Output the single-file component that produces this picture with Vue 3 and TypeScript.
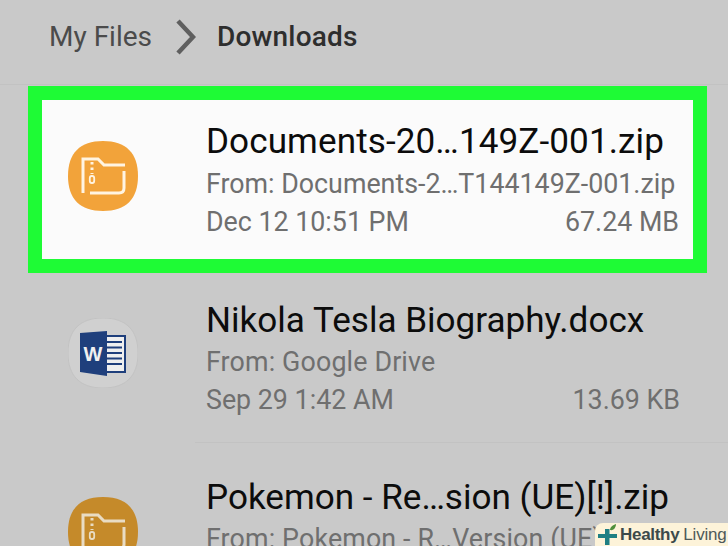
<script setup lang="ts">
interface FileRow {
  name: string;
  from: string;
  date: string;
  size: string;
  kind: "zip" | "doc";
}

const rows: FileRow[] = [
  { name: "Nikola Tesla Biography.docx", from: "From: Google Drive", date: "Sep 29 1:42 AM", size: "13.69 KB", kind: "doc" },
  { name: "Pokemon - Re…sion (UE)[!].zip", from: "From: Pokemon - R…Version (UE)[!].zip", date: "", size: "", kind: "zip" },
];

const squircle = "M35 0 C58 0 70 12 70 35 C70 58 58 70 35 70 C12 70 0 58 0 35 C0 12 12 0 35 0 Z";
</script>

<template>
  <div class="screen">
    <header class="crumbs">
      <span class="crumb">My Files</span>
      <svg class="chevron" width="20" height="36" viewBox="0 0 20 36">
        <path d="M2 2 L17 18 L2 34" fill="none" stroke="#5f5f5f" stroke-width="4.5" />
      </svg>
      <span class="crumb current">Downloads</span>
    </header>

    <section class="row first">
      <div class="icon-cell">
        <svg width="70" height="70" viewBox="0 0 70 70">
          <path :d="squircle" fill="#f2a33a" />
          <g fill="none" stroke="#fff4e2" stroke-width="3">
            <path d="M15 52 V18 H30 L36 24 H57" />
            <path d="M56 30 V47 Q56 52 51 52 H22" />
            <path d="M24 21 V33" stroke-dasharray="2.5 3" />
            <rect x="21.8" y="35" width="4.4" height="7" rx="2" stroke-width="1.8" />
          </g>
        </svg>
      </div>
      <div class="info">
        <div class="name">Documents-20…149Z-001.zip</div>
        <div class="meta">From: Documents-2…T144149Z-001.zip</div>
        <div class="meta split"><span>Dec 12 10:51 PM</span><span>67.24 MB</span></div>
      </div>
    </section>

    <section v-for="row in rows" :key="row.name" class="row" :class="row.kind">
      <div class="icon-cell">
        <svg v-if="row.kind === 'doc'" width="70" height="70" viewBox="0 0 70 70">
          <path :d="squircle" fill="#d0d0d0" stroke="#c3c3c3" />
          <rect x="38" y="18" width="19" height="36" fill="#efefef" stroke="#1f3f7c" stroke-width="2" />
          <path d="M39 24 H54 M39 29.500 H54 M39 35 H54 M39 40.500 H54 M39 46 H54" stroke="#1f3f7c" stroke-width="2" />
          <path d="M12 15 L39 13 V58 L12 54 Z" fill="#1f3f7c" />
          <text x="25" y="43" class="word" text-anchor="middle">W</text>
        </svg>
        <svg v-else width="70" height="70" viewBox="0 0 70 70">
          <path :d="squircle" fill="#c58a2a" />
          <g fill="none" stroke="#e9dcc3" stroke-width="3">
            <path d="M15 52 V18 H30 L36 24 H57" />
            <path d="M56 30 V47 Q56 52 51 52 H22" />
            <path d="M24 21 V33" stroke-dasharray="2.5 3" />
            <rect x="21.800" y="35" width="4.400" height="7" rx="2" stroke-width="1.8" />
          </g>
        </svg>
      </div>
      <div class="info">
        <div class="name">{{ row.name }}</div>
        <div class="meta from">{{ row.from }}</div>
        <div class="meta split"><span>{{ row.date }}</span><span>{{ row.size }}</span></div>
      </div>
    </section>

    <div class="watermark">
      <svg width="22" height="22" viewBox="0 0 22 22">
        <path d="M8 5 H12.500 V10 H20 V14 H12.500 V21 H8 V14 H1 V10 H8 Z" fill="#1f7f83" />
        <path d="M13 6 C13 3 16 1 19 0 C19 3 17 7 13 6 Z" fill="#4f8f3a" />
      </svg>
      <span class="brand">Healthy</span>
      <span class="brand-light">Living</span>
    </div>
  </div>
</template>

<style>
html,
body {
  margin: 0;
  background: #c9c9c9;
}
</style>

<style scoped>
.screen {
  position: relative;
  width: 728px;
  height: 546px;
  overflow: hidden;
  background: #c9c9c9;
  font-family: Roboto, "Liberation Sans", sans-serif;
}

.crumbs {
  display: flex;
  align-items: center;
  height: 85px;
  box-sizing: border-box;
  padding: 0 0 11px 49px;
  border-bottom: 1px solid #c2c2c2;
  margin-bottom: 1px;
}

.crumb {
  font-size: 28px;
  color: #4b4b4b;
}

.crumb.current {
  font-weight: 500;
  color: #2e2e2e;
  letter-spacing: 0.2px;
}

.chevron {
  margin: 0 21px 0 24px;
}

.row {
  display: flex;
  box-sizing: border-box;
}

.row.first {
  width: 679px;
  height: 187px;
  margin-left: 28px;
  border: 14px solid #1efb35;
  background: #fbfbfb;
}

.icon-cell {
  width: 206px;
  flex: none;
  box-sizing: border-box;
  padding-left: 68px;
}

.row.first .icon-cell {
  width: 164px;
  padding: 41px 0 0 26px;
}

.row.doc .icon-cell {
  padding-top: 45px;
}

.row.zip .icon-cell {
  padding-top: 54px;
}

.info {
  flex: 1;
  min-width: 0;
  padding-right: 48px;
}

.row.first .info {
  padding: 19px 14px 0 0;
}

.row.first .name {
  margin-bottom: 2px;
  letter-spacing: 0.1px;
}

.row.doc {
  position: relative;
  height: 170px;
}

.row.doc .info {
  padding-top: 25px;
}

.row.doc .name {
  margin-bottom: 1px;
}

.row.doc::after {
  content: "";
  position: absolute;
  left: 195px;
  right: 0;
  bottom: 0;
  border-top: 1px solid #c2c2c2;
}

.row.zip {
  height: 159px;
}

.row.zip .info {
  padding-top: 32px;
}

.row.zip .name {
  margin-bottom: 1px;
}

.name {
  font-size: 35.1px;
  line-height: 44px;
  color: #0c0c0c;
  white-space: nowrap;
}

.meta {
  font-size: 26.8px;
  line-height: 38px;
  color: #6f6f6f;
  white-space: nowrap;
}

.meta.from {
  letter-spacing: 0.15px;
}

.split {
  display: flex;
  justify-content: space-between;
}

.word {
  font-family: "Liberation Sans", sans-serif;
  font-size: 20px;
  font-weight: 700;
  fill: #f0f0f0;
}

.watermark {
  position: absolute;
  right: 0;
  bottom: 0;
  width: 133px;
  height: 23px;
  display: flex;
  align-items: center;
  box-sizing: border-box;
  padding-left: 2px;
  background: #fdf3d9;
  border-top-left-radius: 8px;
  font-family: "Liberation Sans", sans-serif;
  font-size: 17px;
  white-space: nowrap;
}

.watermark svg {
  flex: none;
  margin-right: 1px;
}

.brand {
  font-weight: 700;
  color: #3c4a4a;
  letter-spacing: -0.3px;
}

.brand-light {
  margin-left: 4px;
  color: #4f5a5a;
  letter-spacing: -0.2px;
}
</style>
